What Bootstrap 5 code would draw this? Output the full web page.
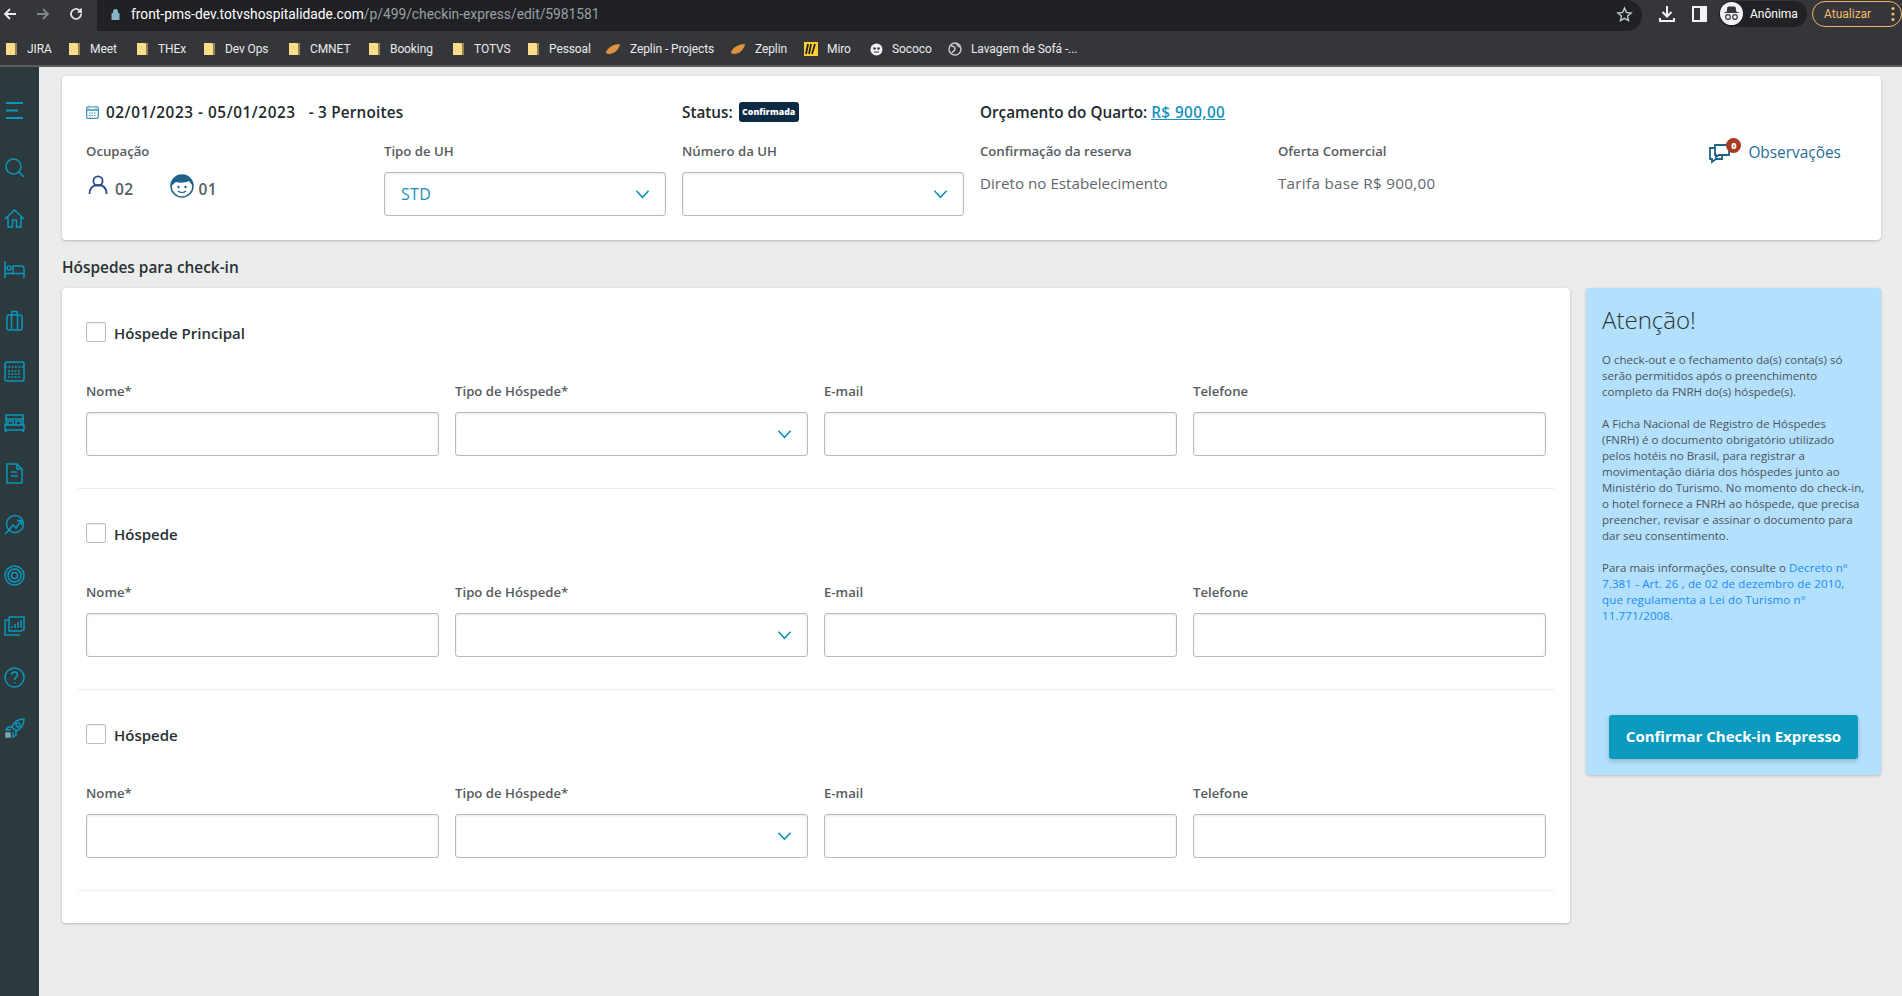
<!DOCTYPE html>
<html lang="pt-BR"><head><meta charset="utf-8"><title>Check-in Expresso</title>
<link href="https://cdn.jsdelivr.net/npm/bootstrap@5.3.0/dist/css/bootstrap.min.css" rel="stylesheet">
<script src="https://cdn.jsdelivr.net/npm/bootstrap@5.3.0/dist/js/bootstrap.bundle.min.js"></script>
<style>
html,body{height:996px;overflow:hidden}
body{font-family:"Open Sans","Noto Sans",sans-serif;background:#ebeded;color:#212529;font-size:14px}
.chrome-top{height:31px;background:#35363a;padding-left:2px;color:#e8eaed}
.nav-ic{width:16px;flex:none;margin-right:17px;margin-bottom:4px}
.url-pill{position:relative;margin-left:-4px;width:1545px;height:31px;background:#202124;border-radius:0 16px 16px 0;font:13.8px Roboto,sans-serif;padding:0 0 4px 34px}
.url-pill b{font-weight:400;color:#fff}.url-pill span{color:#9aa0a6}
.url-lock{position:absolute;left:14px;top:8px}
.url-star{position:absolute;right:9px;top:6px}
.tool-ic{margin-left:17px;flex:none;margin-bottom:4px}
.anon-pill{margin-left:12px;margin-bottom:4px;width:88px;height:26px;background:#202124;border-radius:14px;padding-left:1px;font:12px Roboto,sans-serif;color:#fff;gap:7px}
.anon-av{width:23px;height:23px;border-radius:50%;background:#f1f3f4}
.upd-pill{margin-left:5px;margin-bottom:4px;width:90px;height:26px;border:1px solid #f2b661;border-radius:13px;color:#f6bb66;font:12px Roboto,sans-serif;padding:0 6px 0 11px}
.chrome-marks{height:36px;background:#35363a;border-bottom:2px solid #5b5d60;font:12px Roboto,sans-serif;color:#e8eaed;padding:2px 0 0 5px}
.mark-item{gap:9px;flex:none;letter-spacing:-.1px}
.w-a{width:63px}.w-b{width:68px}.w-c{width:67px}.w-d{width:85px}.w-e{width:80px}.w-f{width:84px}.w-g{width:75px}.w-h{width:78px}.w-i{width:125px}.w-j{width:74px}.w-k{width:66px}.w-l{width:78px}
.app-shell{height:929px}
.side-rail{width:39px;flex:none;background:#2d3a3d;padding-top:33px;gap:30px}
.side-rail svg{display:block;margin-left:4px;width:21px;height:21px;flex:none;fill:none;stroke:#0a97bd;stroke-width:1.5}
.side-rail svg:first-child{margin-bottom:6px}
.page-area{flex:1;padding:9px 21px 0 23px;min-width:0}
.pane{border:0;border-radius:4px;background:#fff;box-shadow:0 1px 3px rgba(0,0,0,.22)}
.stay-pane{height:164px;padding:24px 23px 0 24px}
.stay-head{font-size:15.3px;font-weight:600;line-height:24px;color:#22292d;height:24px}
.date-range{letter-spacing:.56px;margin-left:7px}
.nights{letter-spacing:.2px;margin-left:9px}
.stay-fields{margin-top:17px}
.fld-label{font-size:13.2px;font-weight:600;line-height:20px;color:#565c60;margin-bottom:11px}
.fld-text{font-size:15.2px;line-height:22px;color:#62686c}
.wide-num{letter-spacing:.3px}
.occ{font-size:15.5px;font-weight:600;color:#565c60;gap:7px;line-height:24px;margin:16px 0 0 2px;letter-spacing:.4px}
.occ-gap{margin-left:29px;margin-top:-7px}
.occ-near{margin-left:-2px}
.occ-person{margin-top:-10px}
.status-tag{background:#0c2a44;color:#fff;font-size:8.8px;font-weight:800;height:20px;line-height:20px;width:60px;flex:none;text-align:center;border-radius:3px;margin-left:6px;letter-spacing:0;white-space:nowrap}
.money{color:#1a91bd;font-weight:600;letter-spacing:.4px}
.obs-link{color:#1f6e98;font-size:15.4px;gap:8px;line-height:20px;justify-content:flex-end;padding-right:17px}
.obs-ic{position:relative;width:32px;height:24px}
.obs-num{position:absolute;right:-1px;top:-3px;width:15px;height:15px;border-radius:50%;background:#a83b22;color:#fff;font-size:9px;font-weight:800;line-height:15px;text-align:center}
.sect-title{font-size:15.4px;font-weight:600;line-height:24px;margin:16px 0 8px;color:#2a3135}
.main-cols{gap:16px}
.guest-pane{flex:1;min-width:0;padding:0 16px 32px;height:635px}
.guest-block{padding:34px 8px 32px;border-bottom:1px solid #e9ecec}
.check-line{gap:8px;height:20px;margin-bottom:39px}
.form-check-input.guest-check[type=checkbox]{width:20px;height:20px;margin:0;border:1px solid #b6bfc1;border-radius:2px;box-shadow:inset 0 1px 2px rgba(0,0,0,.08);flex:none}
.check-line label{font-size:15px;font-weight:600;line-height:22px;color:#2a3135;padding-top:1px}
.fld-input,.fld-select{height:44px;border:1px solid #b3bcbe;border-radius:3px;box-shadow:inset 0 1px 3px rgba(0,0,0,.09);background-color:#fff;font-size:16px;padding:0 16px;letter-spacing:.3px}
.fld-select{color:#1a8fb8;background-image:url("data:image/svg+xml,%3Csvg xmlns='http://www.w3.org/2000/svg' viewBox='0 0 16 10'%3E%3Cpath d='M1.5 1.5 8 8.5l6.5-7' fill='none' stroke='%230c93b6' stroke-width='1.7'/%3E%3C/svg%3E");background-size:15px 10px;background-position:right 15px center}
.notice-pane{width:295px;flex:none;height:487px;background:#b3e0fc;padding:16px;color:#4b5459}
.notice-pane h4{font-size:24px;font-weight:300;line-height:32px;color:#2c3438;margin:0 0 16px}
.notice-txt{font-size:11.5px;line-height:16px;margin:0}
.notice-txt a{color:#1b8cf5;text-decoration:none;letter-spacing:.15px}
.go-btn{display:block;width:249px;height:44px;margin:auto auto 0;background:#0c9abe;border:0;border-radius:3px;color:#fff;font-weight:700;font-size:15px;line-height:42px;padding:0 0 2px;box-shadow:0 2px 5px rgba(0,0,0,.2)}
</style></head>
<body class="d-flex flex-column">
<div class="chrome-top d-flex align-items-center">
 <svg class="nav-ic" width="16" height="16" viewBox="0 0 16 16"><path d="M14 8H3M8 3 3 8l5 5" fill="none" stroke="#e8eaed" stroke-width="1.8"/></svg>
 <svg class="nav-ic" width="16" height="16" viewBox="0 0 16 16"><path d="M2 8h11M8 3l5 5-5 5" fill="none" stroke="#80868b" stroke-width="1.8"/></svg>
 <svg class="nav-ic" width="16" height="16" viewBox="0 0 16 16"><path d="M13 8a5 5 0 1 1-1.500-3.600L13 6V2.500M13 6H9.500" fill="none" stroke="#e8eaed" stroke-width="1.7"/></svg>
 <div class="url-pill d-flex align-items-center"><svg class="url-lock" width="9" height="12" viewBox="0 0 9 12"><path d="M2 5V3.500a2.500 2.500 0 0 1 5 0V5h1.500v7H.5V5z" fill="#8ab4c8"/></svg><b>front-pms-dev.totvshospitalidade.com</b><span>/p/499/checkin-express/edit/5981581</span>
  <svg class="url-star" width="17" height="17" viewBox="0 0 24 24"><path d="m12 3 2.700 6.100 6.600.7-5 4.400 1.400 6.500L12 17.400l-5.700 3.300 1.400-6.500-5-4.400 6.600-.7z" fill="none" stroke="#c4c7ca" stroke-width="2"/></svg></div>
 <svg class="tool-ic" width="16" height="18" viewBox="0 0 16 18"><path d="M8 1v10M3.500 7 8 11.500 12.500 7M1 13v3h14v-3" fill="none" stroke="#f1f3f4" stroke-width="2"/></svg>
 <svg class="tool-ic" width="15" height="16" viewBox="0 0 15 16"><path d="M1 1h13v14H1z" fill="none" stroke="#f1f3f4" stroke-width="2"/><path d="M8 1h6v14H8z" fill="#f1f3f4"/></svg>
 <div class="anon-pill d-flex align-items-center"><span class="anon-av d-flex align-items-center justify-content-center"><svg width="17" height="17" viewBox="0 0 17 17"><path d="M4 7 5 2h7l1 5zM1.500 7.500h14" fill="#35363a" stroke="#35363a"/><circle cx="5" cy="12" r="2.300" fill="none" stroke="#35363a" stroke-width="1.200"/><circle cx="12" cy="12" r="2.300" fill="none" stroke="#35363a" stroke-width="1.200"/></svg></span>Anônima</div>
 <div class="upd-pill d-flex align-items-center justify-content-between">Atualizar<svg width="4" height="16" viewBox="0 0 4 16"><circle cx="2" cy="2.500" r="1.600" fill="#f6bb66"/><circle cx="2" cy="8" r="1.600" fill="#f6bb66"/><circle cx="2" cy="13.500" r="1.600" fill="#f6bb66"/></svg></div>
</div>
<div class="chrome-marks d-flex align-items-center">
 <div class="mark-item d-flex align-items-center w-a"><svg width="13" height="14" viewBox="0 0 13 14"><path d="M1 1h8l3 2v10H1z" fill="#fbdc8b"/><path d="M10 1h2v12h-2z" fill="#8f8354"/></svg>JIRA</div>
 <div class="mark-item d-flex align-items-center w-b"><svg width="13" height="14" viewBox="0 0 13 14"><path d="M1 1h8l3 2v10H1z" fill="#fbdc8b"/><path d="M10 1h2v12h-2z" fill="#8f8354"/></svg>Meet</div>
 <div class="mark-item d-flex align-items-center w-c"><svg width="13" height="14" viewBox="0 0 13 14"><path d="M1 1h8l3 2v10H1z" fill="#fbdc8b"/><path d="M10 1h2v12h-2z" fill="#8f8354"/></svg>THEx</div>
 <div class="mark-item d-flex align-items-center w-d"><svg width="13" height="14" viewBox="0 0 13 14"><path d="M1 1h8l3 2v10H1z" fill="#fbdc8b"/><path d="M10 1h2v12h-2z" fill="#8f8354"/></svg>Dev Ops</div>
 <div class="mark-item d-flex align-items-center w-e"><svg width="13" height="14" viewBox="0 0 13 14"><path d="M1 1h8l3 2v10H1z" fill="#fbdc8b"/><path d="M10 1h2v12h-2z" fill="#8f8354"/></svg>CMNET</div>
 <div class="mark-item d-flex align-items-center w-f"><svg width="13" height="14" viewBox="0 0 13 14"><path d="M1 1h8l3 2v10H1z" fill="#fbdc8b"/><path d="M10 1h2v12h-2z" fill="#8f8354"/></svg>Booking</div>
 <div class="mark-item d-flex align-items-center w-g"><svg width="13" height="14" viewBox="0 0 13 14"><path d="M1 1h8l3 2v10H1z" fill="#fbdc8b"/><path d="M10 1h2v12h-2z" fill="#8f8354"/></svg>TOTVS</div>
 <div class="mark-item d-flex align-items-center w-h"><svg width="13" height="14" viewBox="0 0 13 14"><path d="M1 1h8l3 2v10H1z" fill="#fbdc8b"/><path d="M10 1h2v12h-2z" fill="#8f8354"/></svg>Pessoal</div>
 <div class="mark-item d-flex align-items-center w-i"><svg width="16" height="12" viewBox="0 0 16 12"><path d="M1 9c2-5 8-8 14-8-1 6-6 10-11 10-2 0-3-1-3-2z" fill="#e0933f"/></svg>Zeplin - Projects</div>
 <div class="mark-item d-flex align-items-center w-j"><svg width="16" height="12" viewBox="0 0 16 12"><path d="M1 9c2-5 8-8 14-8-1 6-6 10-11 10-2 0-3-1-3-2z" fill="#e0933f"/></svg>Zeplin</div>
 <div class="mark-item d-flex align-items-center w-k"><svg width="14" height="14" viewBox="0 0 14 14"><path d="M0 0h14v14H0z" fill="#ffd02f"/><path d="M4 2 2 12M7 2 5 12M11 2 8 12" stroke="#222" stroke-width="1.800"/></svg>Miro</div>
 <div class="mark-item d-flex align-items-center w-l"><svg width="13" height="13" viewBox="0 0 13 13"><circle cx="6.500" cy="6.500" r="6" fill="#f1f3f4"/><circle cx="4.500" cy="5.500" r="1.300" fill="#35363a"/><circle cx="8.500" cy="5.500" r="1.300" fill="#35363a"/><path d="M4 9h5" stroke="#35363a"/></svg>Sococo</div>
 <div class="mark-item d-flex align-items-center"><svg width="14" height="14" viewBox="0 0 14 14"><circle cx="7" cy="7" r="6" fill="none" stroke="#c4c7ca" stroke-width="1.500"/><path d="M3 4c2 0 4 1 4 3s-2 2-3 4M8 2c2 1 2 3 4 3" fill="none" stroke="#c4c7ca" stroke-width="1.500"/></svg>Lavagem de Sofá -...</div>
</div>
<div class="app-shell d-flex">
 <nav class="side-rail d-flex flex-column">
  <svg viewBox="0 0 21 21"><path d="M2 3h17M2 10.500h12M2 18h17" stroke-width="1.800"/></svg>
  <svg viewBox="0 0 21 21"><circle cx="9.500" cy="9.500" r="7.500"/><path d="m15 15 5 5"/></svg>
  <svg viewBox="0 0 21 21"><path d="M1 11 10.500 2 20 11M4 9v10h4.500v-7h4v7H17V9"/></svg>
  <svg viewBox="0 0 21 21"><path d="M1 2v17M1 14.500h19M20 19v-9c0-2-1-3-3-3H9v7"/><circle cx="5" cy="9" r="2"/></svg>
  <svg viewBox="0 0 21 21"><rect x="3" y="5" width="15" height="15" rx="2"/><path d="M7.500 5v15M13.500 5v15M8 5V1.500h5V5"/></svg>
  <svg viewBox="0 0 21 21"><rect x="1" y="1" width="19" height="19" rx="2"/><path d="M1 6h19M4 10h13M4 13h13M4 16h13" stroke-dasharray="2 1.300"/></svg>
  <svg viewBox="0 0 21 21"><path d="M1 13h19v5H1zM2 13V3h17v10M2 18v2M19 18v2M4 13V9h5v4M12 13V9h5v4M1 7h19"/></svg>
  <svg viewBox="0 0 21 21"><path d="M3 1h10l5 5v14H3zM13 1v5h5M7 9h6M7 13h7"/></svg>
  <svg viewBox="0 0 21 21"><circle cx="11" cy="10" r="8.500"/><path d="M1 20l5-5 3-4 3 3 5-7M13 6.500h4.500V11"/></svg>
  <svg viewBox="0 0 21 21"><circle cx="10.500" cy="10.500" r="9.500"/><circle cx="10.500" cy="10.500" r="6.500"/><circle cx="10.500" cy="10.500" r="3"/></svg>
  <svg viewBox="0 0 21 21"><path d="M5 1h15v13h-2M1 4v15h15M1 4h3M5 1v14h13"/><path d="M8 12v-2M11 12V8M14 12V6M17 12V4" /></svg>
  <svg viewBox="0 0 21 21"><circle cx="10.500" cy="10.500" r="9.500"/><path d="M7.500 8c0-4 6-4 6 0 0 2-3 2-3 5M10.500 15v1.500"/></svg>
  <svg viewBox="0 0 21 21"><path d="M20 1c-6 0-10 3-12 8l4 4c5-2 8-6 8-12zM8 9H4l-2 3h5M12 13v4l-3 2v-5"/><circle cx="14" cy="7" r="2"/><path d="M2 15h4v4H2z" fill="#7aa6b4" stroke="#7aa6b4"/></svg>
 </nav>
 <main class="page-area">
  <section class="card pane stay-pane">
   <div class="row gx-3 stay-head">
    <div class="col-4 d-flex align-items-center"><svg width="13" height="14" viewBox="0 0 13 14"><rect x=".7" y="2" width="11.600" height="11.300" rx="1" fill="none" stroke="#3d8fb5" stroke-width="1.200"/><path d="M.7 5h11.600" stroke="#3d8fb5" stroke-width="1.500"/><path d="M3 .5v3M10 .5v3M3 8h7M3 10.500h7" stroke="#3d8fb5" stroke-dasharray="1.500 1"/></svg><span class="date-range">02/01/2023 - 05/01/2023</span><span class="nights">&nbsp;- 3 Pernoites</span></div>
    <div class="col-2 d-flex align-items-center">Status:<span class="status-tag">Confirmada</span></div>
    <div class="col-6">Orçamento do Quarto: <a href="#" class="money">R$ 900,00</a></div>
   </div>
   <div class="row gx-3 stay-fields">
    <div class="col-2"><div class="fld-label">Ocupação</div>
     <div class="occ d-flex align-items-center"><svg class="occ-person" width="20" height="19" viewBox="0 0 20 19"><circle cx="10" cy="6" r="4.600" fill="none" stroke="#2a4a8d" stroke-width="1.800"/><path d="M1.500 19c0-6 3-9 8.500-9s8.500 3 8.500 9" fill="none" stroke="#2a4a8d" stroke-width="1.800"/></svg><span>02</span>
      <svg class="occ-gap" width="24" height="24" viewBox="0 0 24 24"><circle cx="12" cy="12" r="11" fill="#fff" stroke="#1f6288" stroke-width="1.500"/><path d="M1 12C1 5 6 1 12 1s11 4 11 11c-2-2-3-4-4-5-4 2-9 2-13 1-2 1-3 3-5 4z" fill="#1f6288"/><circle cx="8.500" cy="13" r="1.200" fill="#1f6288"/><circle cx="15.500" cy="13" r="1.200" fill="#1f6288"/><path d="M8 17c2 2 6 2 8 0" fill="none" stroke="#1f6288" stroke-width="1.200"/></svg><span class="occ-near">01</span></div></div>
    <div class="col-2"><div class="fld-label">Tipo de UH</div><select class="form-select fld-select" aria-label="Tipo de UH"><option>STD</option></select></div>
    <div class="col-2"><div class="fld-label">Número da UH</div><select class="form-select fld-select" aria-label="Número da UH"><option></option></select></div>
    <div class="col-2"><div class="fld-label">Confirmação da reserva</div><div class="fld-text">Direto no Estabelecimento</div></div>
    <div class="col-2"><div class="fld-label">Oferta Comercial</div><div class="fld-text wide-num">Tarifa base R$ 900,00</div></div>
    <div class="col-2"><div class="obs-link d-flex align-items-center"><span class="obs-ic"><svg width="26" height="24" viewBox="0 0 26 24"><path d="M7 4h14v10H11l-3 2v-2H7zM7 7H2v11h2v3l4-3h6v-4" fill="none" stroke="#1f6288" stroke-width="1.800"/></svg><span class="obs-num">0</span></span>Observações</div></div>
   </div>
  </section>
  <div class="sect-title">Hóspedes para check-in</div>
  <div class="main-cols d-flex align-items-start">
   <section class="card pane guest-pane">
    <div class="guest-block">
     <div class="check-line d-flex align-items-center"><input class="form-check-input guest-check" type="checkbox" id="g1"><label for="g1">Hóspede Principal</label></div>
     <div class="row gx-3">
      <div class="col-3"><div class="fld-label">Nome*</div><input class="form-control fld-input" aria-label="Nome"></div>
      <div class="col-3"><div class="fld-label">Tipo de Hóspede*</div><select class="form-select fld-select" aria-label="Tipo de Hóspede"><option></option></select></div>
      <div class="col-3"><div class="fld-label">E-mail</div><input class="form-control fld-input" aria-label="E-mail"></div>
      <div class="col-3"><div class="fld-label">Telefone</div><input class="form-control fld-input" aria-label="Telefone"></div>
     </div>
    </div>
    <div class="guest-block">
     <div class="check-line d-flex align-items-center"><input class="form-check-input guest-check" type="checkbox" id="g2"><label for="g2">Hóspede</label></div>
     <div class="row gx-3">
      <div class="col-3"><div class="fld-label">Nome*</div><input class="form-control fld-input" aria-label="Nome"></div>
      <div class="col-3"><div class="fld-label">Tipo de Hóspede*</div><select class="form-select fld-select" aria-label="Tipo de Hóspede"><option></option></select></div>
      <div class="col-3"><div class="fld-label">E-mail</div><input class="form-control fld-input" aria-label="E-mail"></div>
      <div class="col-3"><div class="fld-label">Telefone</div><input class="form-control fld-input" aria-label="Telefone"></div>
     </div>
    </div>
    <div class="guest-block">
     <div class="check-line d-flex align-items-center"><input class="form-check-input guest-check" type="checkbox" id="g3"><label for="g3">Hóspede</label></div>
     <div class="row gx-3">
      <div class="col-3"><div class="fld-label">Nome*</div><input class="form-control fld-input" aria-label="Nome"></div>
      <div class="col-3"><div class="fld-label">Tipo de Hóspede*</div><select class="form-select fld-select" aria-label="Tipo de Hóspede"><option></option></select></div>
      <div class="col-3"><div class="fld-label">E-mail</div><input class="form-control fld-input" aria-label="E-mail"></div>
      <div class="col-3"><div class="fld-label">Telefone</div><input class="form-control fld-input" aria-label="Telefone"></div>
     </div>
    </div>
   </section>
   <aside class="card pane notice-pane">
    <h4>Atenção!</h4>
    <p class="notice-txt">O check-out e o fechamento da(s) conta(s) só<br>serão permitidos após o preenchimento<br>completo da FNRH do(s) hóspede(s).<br><br>A Ficha Nacional de Registro de Hóspedes<br>(FNRH) é o documento obrigatório utilizado<br>pelos hotéis no Brasil, para registrar a<br>movimentação diária dos hóspedes junto ao<br>Ministério do Turismo. No momento do check-in,<br>o hotel fornece a FNRH ao hóspede, que precisa<br>preencher, revisar e assinar o documento para<br>dar seu consentimento.<br><br>Para mais informações, consulte o <a href="#">Decreto n°<br>7.381 - Art. 26 , de 02 de dezembro de 2010,<br>que regulamenta a Lei do Turismo n°<br>11.771/2008.</a></p>
    <button class="btn go-btn" type="button">Confirmar Check-in Expresso</button>
   </aside>
  </div>
 </main>
</div>
</body></html>
